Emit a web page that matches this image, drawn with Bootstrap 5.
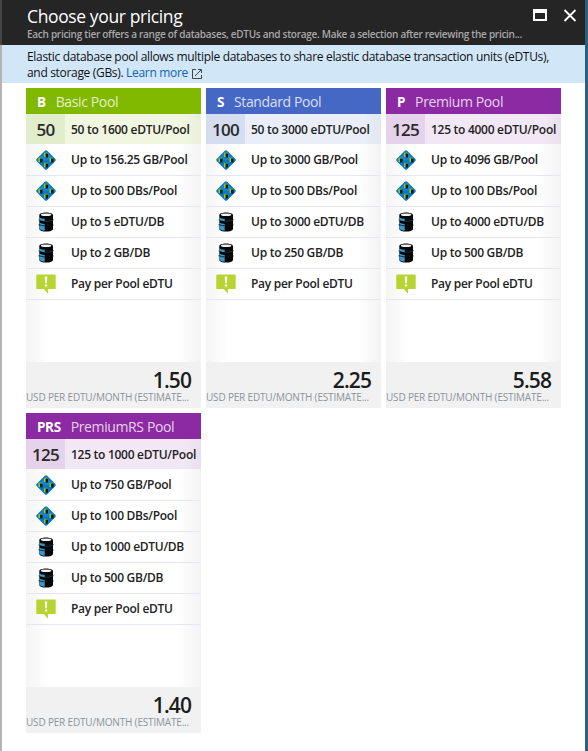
<!DOCTYPE html>
<html lang="en">
<head>
<meta charset="utf-8">
<title>Choose your pricing</title>
<link href="https://cdn.jsdelivr.net/npm/bootstrap@5.3.0/dist/css/bootstrap.min.css" rel="stylesheet">
<style>
body{font-family:"Open Sans","Noto Sans",sans-serif;font-size:12px;line-height:16px;color:#111;background:#fff;height:751px;overflow:hidden}
.blade{height:751px;border-right:3px solid #2f5f7e;border-left:2px solid #b4b4b4}
.blade-head{height:45px;background:#252525;color:#fff;margin-left:-2px;border-left:2px solid #444;padding:5px 7px 0 25px}
.blade-title{font-size:17.5px;line-height:22px;letter-spacing:-.38px;font-weight:400}
.blade-sub{font-size:10px;line-height:13px;padding-top:1px;font-weight:600;color:#a8a8a8;letter-spacing:-.28px}
.info{height:38px;background:#d1e6f7;padding:4px 0 0 25px;letter-spacing:-.32px}
.info a{color:#1063b5}
.info svg{margin-left:1px}
.tiers{padding:5px 0 0 24px;gap:5px}
.tier{width:175px;height:320px}
.tier-head{height:26px;padding:2px 0 0 11px;background:var(--c);font-size:14px;letter-spacing:-.38px;color:rgba(255,255,255,.8)}
.tier-head b{color:#fff;font-size:13.5px;margin-right:10px}
.dtu{height:30px;background:linear-gradient(90deg,#0001,#0000 13%,#0000 90%,#00000008),var(--l)}
.dtu-num{width:39px;background:var(--m);font-size:17px;font-weight:600;color:#2a2a2a;letter-spacing:-.8px;padding-top:2px}
.label{font-weight:600;color:#222;letter-spacing:-.28px;padding:0 0 0 6px}
.dtu .label{padding-top:2px}
.shade{background:linear-gradient(90deg,#f5f5f5,#fff 13%,#fff 87%,#f3f3f3);padding-top:1px}
.feat{height:31px;border-bottom:1px solid #e6e6f5}
.feat svg{margin-left:10px;margin-right:9px}
.foot{height:46px;background:#f1f1f1}
.price{font-size:21px;line-height:24px;font-weight:600;color:#1c1c1c;padding:6px 10px 0 0;letter-spacing:-.9px}
.unit{font-size:10px;line-height:11px;color:#8a949e;letter-spacing:-.18px}
.basic{--c:#80b900;--l:#f0f6e0;--m:#e2eecb}
.standard{--c:#4668c5;--l:#e9eef8;--m:#d5ddf0}
.premium{--c:#8b2aa2;--l:#f2e7f5;--m:#e5d2eb}
</style>
<script src="https://cdn.jsdelivr.net/npm/bootstrap@5.3.0/dist/js/bootstrap.bundle.min.js"></script>
</head>
<body>
<svg class="d-none">
  <symbol id="pool" viewBox="0 0 20 20">
    <path d="M10 2 18 10 10 18 2 10z" fill="#0878cc" stroke="#0878cc" stroke-width="3.4" stroke-linejoin="round"/>
    <path d="M10 1.5 18.5 10h-17z" fill="#3999d9" opacity=".35"/>
    <path d="M8 3h2v4H8zM2.5 8h2v4h-2zM13.5 8h2v4h-2zM8 13.2h2v4H8z" fill="#9bcb20"/>
    <path d="M9.6 3.4H12v4H9.6zM4.1 8.4h2.4v4H4.1zM15.1 8.4h2.4v4h-2.4zM9.6 13.6H12v4H9.6z" fill="#0a1909"/>
    <path d="M8 3h4M2.5 8h4M13.5 8h4M8 13.2h4" stroke="#69a71e" stroke-width=".8"/>
  </symbol>
  <symbol id="db" viewBox="0 0 20 20">
    <path d="M3.3 3.2C3.3-.4 17-.4 17 3.2v13.5c0 3.8-13.7 3.8-13.7 0z" fill="#050505"/>
    <path d="M2.7 7.3h14.9v1H2.7zM2.7 12.5h14.9v1H2.7z" fill="#111"/>
    <path d="M3.3 5.4q2 1.2 5.4 1.4v2.4q-3.2-.2-5.4-1.1zM3.3 10.6q2 1.1 5.4 1.3v6.9q-5.4-.8-5.4-2.6z" fill="#3798ca"/>
    <path d="M2.8 12.6q2.6 1.1 5.9 1.2" stroke="#111" stroke-width=".8" fill="none"/>
    <path d="M8.7 9.2c3 .3 6.3-.2 8.3-1.2" stroke="#245d78" stroke-width=".5" fill="none"/>
    <ellipse cx="10.1" cy="2.8" rx="5.3" ry="1.3" fill="#f3f6f7"/>
  </symbol>
  <symbol id="pay" viewBox="0 0 20 20">
    <path d="M1.2.5h17.6q.9 0 .9.9v12.8q0 .9-.9.9H12v4.6l-4.3-4.6H1.2q-.9 0-.9-.9V1.4q0-.9.9-.9z" fill="#b8d432"/>
    <path d="M8.7 2.6h2.6l-.5 6.7H9.2zM8.8 10.4h2.4v2.2H8.8z" fill="#fff"/>
  </symbol>
</svg>
<main class="blade">
  <header class="blade-head d-flex justify-content-between">
    <div>
      <div class="blade-title">Choose your pricing</div>
      <div class="blade-sub text-nowrap">Each pricing tier offers a range of databases, eDTUs and storage. Make a selection after reviewing the pricin...</div>
    </div>
    <div class="d-flex flex-shrink-0">
      <svg width="48" height="20" viewBox="0 0 48 20"><path d="M3 4h14v12H3zm2 4v6h10V8z" fill="#fff" fill-rule="evenodd"/><path d="m34.5 5 11 11m0-11-11 11" stroke="#fff" stroke-width="1.8"/></svg>
    </div>
  </header>
  <section class="info">Elastic database pool allows multiple databases to share elastic database transaction units (eDTUs),<br>and storage (GBs). <a href="#" class="text-decoration-none">Learn more</a>
    <svg width="10" height="10" viewBox="0 0 10 10" fill="none" stroke="#444"><path d="M4 .5H.5v9h9V6M3 7l6-6M6 .5h3.5V4"/></svg>
  </section>
  <section class="tiers d-flex flex-wrap" id="tiers"></section>
</main>
<script>
const tiers = [
  ['basic','B','Basic Pool','50','50 to 1600','156.25 GB','500','5 eDTU','2','1.50'],
  ['standard','S','Standard Pool','100','50 to 3000','3000 GB','500','3000 eDTU','250','2.25'],
  ['premium','P','Premium Pool','125','125 to 4000','4096 GB','100','4000 eDTU','500','5.58'],
  ['premium','PRS','PremiumRS Pool','125','125 to 1000','750 GB','100','1000 eDTU','500','1.40']
];
const feat = (icon, text) => `<div class="feat d-flex align-items-center"><svg width="20" height="20"><use href="#${icon}"/></svg><span class="label">${text}</span></div>`;
document.getElementById('tiers').innerHTML = tiers.map(([c,k,name,n,range,gb,dbs,per,size,price]) => `
<article class="tier ${c} d-flex flex-column">
  <div class="tier-head d-flex align-items-center"><b>${k}</b><span>${name}</span></div>
  <div class="dtu d-flex align-items-center text-nowrap"><div class="dtu-num h-100 d-flex align-items-center justify-content-center">${n}</div><span class="label">${range} eDTU/Pool</span></div>
  <div class="shade flex-grow-1">${feat('pool',`Up to ${gb}/Pool`)}${feat('pool',`Up to ${dbs} DBs/Pool`)}${feat('db',`Up to ${per}/DB`)}${feat('db',`Up to ${size} GB/DB`)}${feat('pay','Pay per Pool eDTU')}</div>
  <div class="foot"><div class="price text-end">${price}</div><div class="unit text-nowrap">USD PER EDTU/MONTH (ESTIMATE...</div></div>
</article>`).join('');
</script>
</body>
</html>
